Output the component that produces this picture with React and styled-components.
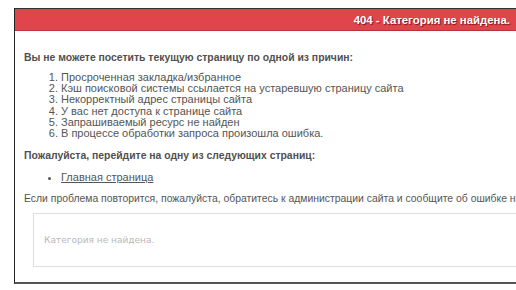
import React from "react";
import styled, { createGlobalStyle } from "styled-components";

const GlobalStyle = createGlobalStyle`
  html, body {
    margin: 0;
    padding: 0;
    background: #fff;
    overflow: hidden;
  }
  body {
    font-family: "Liberation Sans", Arial, sans-serif;
  }
`;

const reasons = [
  "Просроченная закладка/избранное",
  "Кэш поисковой системы ссылается на устаревшую страницу сайта",
  "Некорректный адрес страницы сайта",
  "У вас нет доступа к странице сайта",
  "Запрашиваемый ресурс не найден",
  "В процессе обработки запроса произошла ошибка.",
];

const Page = styled.div`
  padding: 8px 0 0 14px;
  width: 502px;
`;

const ErrorBox = styled.div`
  border-left: 1px solid #222;
  border-top: 1px solid #333;
  border-bottom: 2px solid #555;
  height: 276px;
  box-sizing: border-box;
  background: #fff;
`;

const Header = styled.div`
  background: #e2444c;
  border-bottom: 1px solid #b8323a;
  height: 21px;
  display: flex;
  align-items: center;
  justify-content: flex-end;
  padding-right: 6px;
  color: #fff;
  font-weight: bold;
  font-size: 11.4px;
  white-space: nowrap;
  text-shadow: 1px 1px 1px rgba(80, 0, 0, 0.7);
`;

const Content = styled.div`
  padding: 21px 0 0 9px;
  color: #555;
  font-size: 10.4px;
  white-space: nowrap;
`;

const Title = styled.p`
  margin: 0 0 9px;
  font-weight: bold;
  color: #505050;
`;

const List = styled.ol`
  margin: 0 0 11px;
  padding-left: 37px;
  font-size: 11px;
  line-height: 11.2px;
`;

const Links = styled.ul`
  margin: 0 0 9px;
  padding-left: 37px;
  line-height: 14px;
  font-size: 11px;
`;

const Link = styled.a`
  color: #555;
  text-decoration: underline;
`;

const Note = styled.p`
  margin: 0 0 9px;
`;

const Message = styled.div`
  margin: 0 -40px 0 9px;
  border: 1px solid #ddd;
  height: 52px;
  display: flex;
  align-items: center;
  padding-left: 10px;
  color: #b8b8b8;
  font-family: "DejaVu Sans", Tahoma, sans-serif;
  font-size: 9px;
`;

export default function App() {
  return (
    <>
      <GlobalStyle />
      <Page>
        <ErrorBox>
          <Header>404 - Категория не найдена.</Header>
          <Content>
            <Title>Вы не можете посетить текущую страницу по одной из причин:</Title>
            <List>
              {reasons.map((r) => (
                <li key={r}>{r}</li>
              ))}
            </List>
            <Title>Пожалуйста, перейдите на одну из следующих страниц:</Title>
            <Links>
              <li>
                <Link href="#">Главная страница</Link>
              </li>
            </Links>
            <Note>
              Если проблема повторится, пожалуйста, обратитесь к администрации сайта и сообщите об ошибке ниже.
            </Note>
            <Message>Категория не найдена.</Message>
          </Content>
        </ErrorBox>
      </Page>
    </>
  );
}
